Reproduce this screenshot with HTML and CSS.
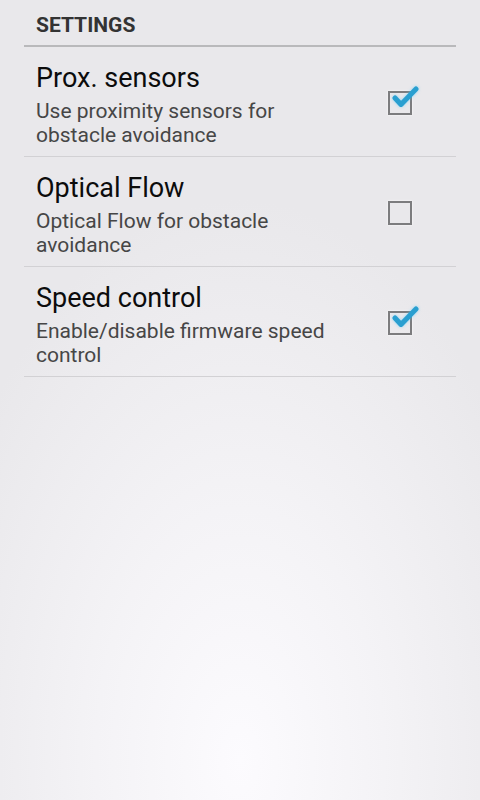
FILE: index.html
```html
<!DOCTYPE html>
<html>
<head>
	<meta charset="utf-8">
	<meta name="viewport" content="width=device-width, initial-scale=1">
	<title>Settings</title>

	<link rel="stylesheet" href="styles.css">
</head>
<body>

	<div class="screen">
		<div class="category">SETTINGS</div>

		<div class="pref">
			<div class="pref-text">
				<div class="pref-title">Prox. sensors</div>
				<div class="pref-summary">Use proximity sensors for obstacle avoidance</div>
			</div>
			<div class="check checked">
				<svg viewBox="0 0 30 28" width="30" height="28"><path d="M5 13 L11 19.5 L26 4" /></svg>
			</div>
		</div>

		<div class="pref">
			<div class="pref-text">
				<div class="pref-title">Optical Flow</div>
				<div class="pref-summary">Optical Flow for obstacle avoidance</div>
			</div>
			<div class="check"></div>
		</div>

		<div class="pref">
			<div class="pref-text">
				<div class="pref-title">Speed control</div>
				<div class="pref-summary">Enable/disable firmware speed control</div>
			</div>
			<div class="check checked">
				<svg viewBox="0 0 30 28" width="30" height="28"><path d="M5 13 L11 19.5 L26 4" /></svg>
			</div>
		</div>
	</div>

</body>
</html>
```

FILE: styles.css
```css
html, body {
	margin: 0;
	height: 100%;
}

body {
	font-family: Roboto, "Noto Sans", sans-serif;
	background: radial-gradient(ellipse 320px 560px at 240px 760px, #fcfbfe 0%, #f4f3f6 45%, #e9e8eb 100%);
	background-color: #e9e8eb;
}

.screen {
	padding: 0 24px;
}

.category {
	padding: 13px 12px 7px;
	height: 25px;
	line-height: 25px;
	font-size: 21px;
	font-weight: bold;
	color: #333;
	border-bottom: 2px solid #b9b9bb;
}

.pref {
	display: flex;
	align-items: center;
	padding: 15px 44px 9px 12px;
	border-bottom: 1px solid #d2d1d4;
}

.pref-text {
	flex: 1;
	padding-right: 40px;
}

.pref-title {
	font-size: 27px;
	line-height: 32px;
	color: #0c0c0c;
}

.pref-summary {
	margin-top: 5px;
	font-size: 21px;
	line-height: 24px;
	color: #464646;
}

.check {
	position: relative;
	width: 20px;
	height: 20px;
	border: 2px solid #7c7c7e;
	box-shadow: 0 0 2px #fff;
	flex: none;
	margin-top: -4px;
}

/* галочка выходит за рамку */
.check svg {
	position: absolute;
	left: 0;
	top: -8px;
	overflow: visible;
}

.check svg path {
	fill: none;
	stroke: #2a9fd0;
	stroke-width: 5;
	stroke-linecap: round;
	stroke-linejoin: round;
	filter: drop-shadow(0 0 1.5px rgba(80, 200, 250, 0.6));
}
```
